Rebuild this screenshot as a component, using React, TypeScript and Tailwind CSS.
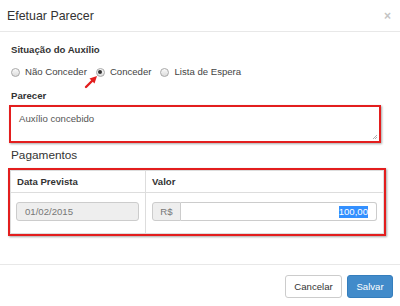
import React from 'react'

function Radio({ checked, label }: { checked?: boolean; label: string }) {
  return (
    <label className="flex items-center gap-[5px]">
      <span className="w-[9px] h-[9px] rounded-full border border-[#a8a8a8] bg-gradient-to-b from-[#fafafa] to-[#dcdcdc] flex items-center justify-center">
        {checked && <span className="w-[4px] h-[4px] rounded-full bg-[#333]" />}
      </span>
      <span>{label}</span>
    </label>
  )
}

const redBox = 'border-2 border-[#e31e1e] shadow-[1px_1px_2px_rgba(0,0,0,0.35)]'

export default function App() {
  return (
    <div
      className="relative w-[400px] h-[306px] bg-white text-[#333] text-[9.6px] leading-[14px] overflow-hidden"
      style={{ fontFamily: '"Liberation Sans", Arial, sans-serif' }}
    >
      {/* header */}
      <div className="h-[32px] border-b border-[#e8e8e8] pl-[7px] pr-[9px] flex items-center justify-between">
        <h4 className="text-[12.4px] leading-[16px] text-[#333]">Efetuar Parecer</h4>
        <span className="text-[12px] font-bold text-[#c4c4c4]">×</span>
      </div>

      {/* body */}
      <div className="pt-[11px] pl-[11px] pr-[14px]">
        <div className="font-bold">Situação do Auxílio</div>
        <div className="mt-[8px] flex items-center gap-[9px] text-[#444]">
          <Radio label="Não Conceder" />
          <Radio checked label="Conceder" />
          <Radio label="Lista de Espera" />
        </div>

        <div className="mt-[10px] font-bold">Parecer</div>
        <div className={`mt-[2px] -ml-[2px] w-[372px] h-[38px] px-[8px] pt-[5px] relative ${redBox}`}>
          <span className="text-[#555]">Auxílio concebido</span>
          <svg className="absolute right-[1px] bottom-[1px]" width="6" height="6" viewBox="0 0 6 6">
            <path d="M1 5L5 1M3 5L5 3" stroke="#999" strokeWidth="0.8" />
          </svg>
        </div>

        <div className="mt-[4px] text-[11.8px] leading-[16px] text-[#333]">Pagamentos</div>
        <div className={`mt-[5px] -ml-[3px] w-[378px] h-[68px] ${redBox}`}>
          <div className="h-full border border-[#ddd] flex flex-col">
            <div className="h-[22px] flex border-b border-[#ddd] font-bold">
              <div className="w-[135px] border-r border-[#ddd] pl-[6px] flex items-center">Data Prevista</div>
              <div className="flex-1 pl-[6px] flex items-center">Valor</div>
            </div>
            <div className="flex-1 flex">
              <div className="w-[135px] border-r border-[#ddd] pl-[5px] pr-[6px] pt-[9px]">
                <div className="h-[19px] rounded-[3px] border border-[#ccc] bg-[#eee] text-[#777] pl-[8px] flex items-center">
                  01/02/2015
                </div>
              </div>
              <div className="flex-1 pl-[6px] pr-[6px] pt-[9px]">
                <div className="h-[19px] flex">
                  <div className="w-[29px] rounded-l-[3px] border border-[#ccc] bg-[#eee] text-[#777] flex items-center justify-center">
                    R$
                  </div>
                  <div className="flex-1 rounded-r-[3px] border border-l-0 border-[#ccc] flex items-center justify-end pr-[8px]">
                    <span className="bg-[#3390ff] text-white leading-[12px]">100,00</span>
                  </div>
                </div>
              </div>
            </div>
          </div>
        </div>
      </div>

      {/* footer */}
      <div className="absolute left-0 right-0 top-[264px] border-t border-[#e8e8e8] pt-[10px] pr-[7px] flex justify-end gap-[5px]">
        <button className="h-[23px] w-[57px] rounded-[3px] border border-[#ccc] bg-white text-[#333]">Cancelar</button>
        <button className="h-[23px] w-[46px] rounded-[3px] border border-[#357ebd] bg-[#428bca] text-white">Salvar</button>
      </div>

      {/* annotation arrow */}
      <svg className="absolute left-[83px] top-[72px]" width="18" height="18" viewBox="0 0 18 18">
        <path d="M3 15L10 8" stroke="#e31e1e" strokeWidth="2.4" strokeLinecap="round" />
        <path d="M14 4L6.5 6.5L11.5 11.5Z" fill="#e31e1e" />
      </svg>
    </div>
  )
}
